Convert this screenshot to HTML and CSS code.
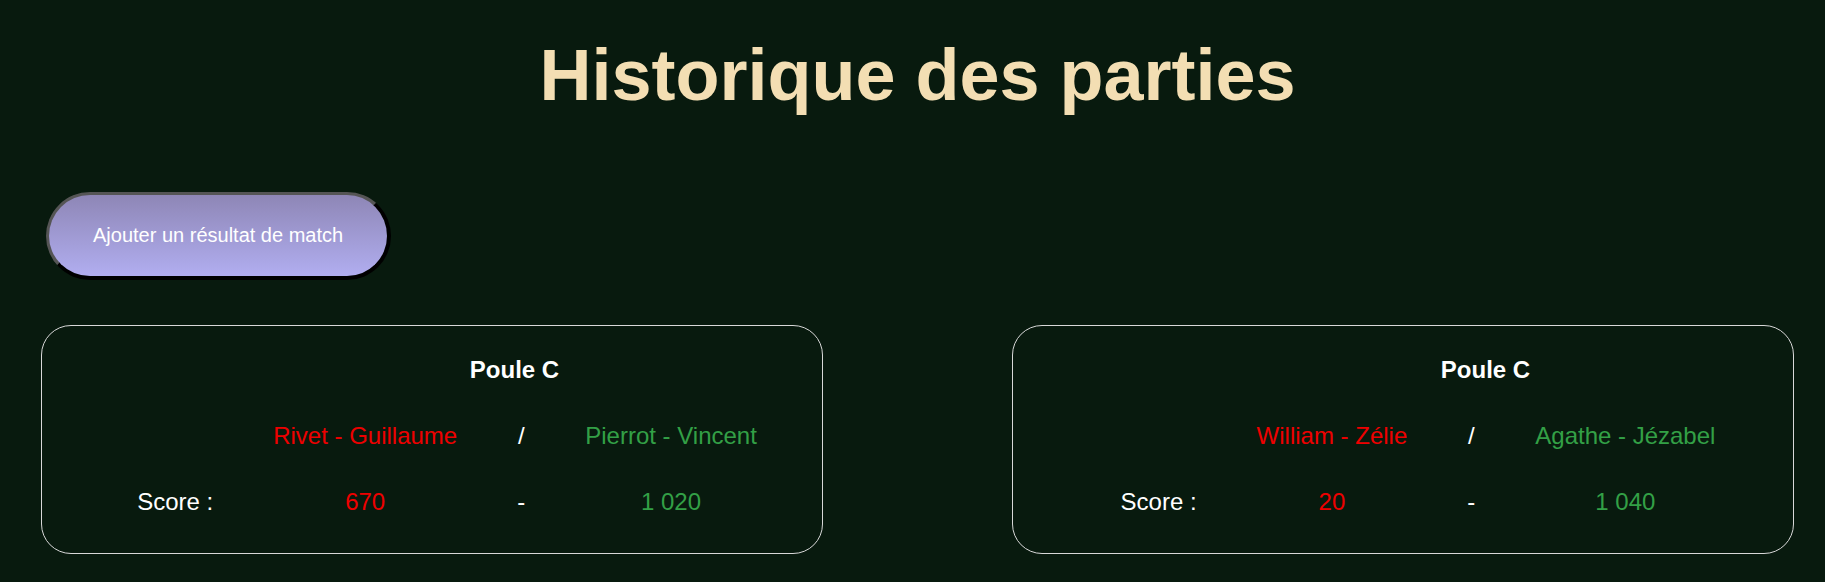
FILE: index.html
```html
<!DOCTYPE html>
<html lang="fr">
<head>
<meta charset="utf-8">
<title>Historique des parties</title>
<link rel="stylesheet" href="styles.css">
</head>
<body>
<main class="page">
  <h1 class="title">Historique des parties</h1>
  <button class="add-btn" type="button">Ajouter un résultat de match</button>
  <section class="matches">
    <article class="card">
      <h2 class="pool">Poule C</h2>
      <table class="match">
        <tr class="row">
          <td></td>
          <td class="team1">Rivet - Guillaume</td>
          <td class="sep">/</td>
          <td class="team2">Pierrot - Vincent</td>
        </tr>
        <tr class="row">
          <td class="label">Score :</td>
          <td class="team1">670</td>
          <td class="sep">-</td>
          <td class="team2">1 020</td>
        </tr>
      </table>
    </article>
    <article class="card">
      <h2 class="pool">Poule C</h2>
      <table class="match">
        <tr class="row">
          <td></td>
          <td class="team1">William - Zélie</td>
          <td class="sep">/</td>
          <td class="team2">Agathe - Jézabel</td>
        </tr>
        <tr class="row">
          <td class="label">Score :</td>
          <td class="team1">20</td>
          <td class="sep">-</td>
          <td class="team2">1 040</td>
        </tr>
      </table>
    </article>
  </section>
</main>
</body>
</html>
```

FILE: styles.css
```css
html, body {
  margin: 0;
  padding: 0;
  background: #081a0e;
}

body {
  font-family: "Liberation Sans", Arial, sans-serif;
  color: #ffffff;
}

.page {
  padding: 0 31px 0 41px;
  display: flex;
  flex-direction: column;
  align-items: flex-start;
}

.title {
  align-self: stretch;
  margin: 34px 0 0;
  text-align: center;
  font-size: 72px;
  font-weight: bold;
  line-height: 83px;
  color: #f3deb3;
}

.add-btn {
  margin: 75px 0 0 5px;
  padding: 28px 44px 29px;
  font-family: "Liberation Sans", Arial, sans-serif;
  font-size: 20px;
  line-height: 24px;
  color: #ffffff;
  border-width: 3px 4px 4px 3px;
  border-style: solid;
  border-color: #555555 #000000 #000000 #555555;
  border-radius: 46px;
  background: linear-gradient(to bottom, #8e86b6, #b1aef0);
}

.matches {
  align-self: stretch;
  margin-top: 45px;
  display: flex;
  justify-content: space-between;
}

.card {
  width: 782px;
  box-sizing: border-box;
  border: 1px solid #d8d8d8;
  border-radius: 30px;
  padding: 30px 0 37px 30px;
}

.pool {
  margin: 0 0 38px;
  padding-left: 135px;
  text-align: center;
  font-size: 24px;
  font-weight: bold;
  line-height: 28px;
  color: #ffffff;
}

.match {
  margin: 0 auto;
  border-collapse: collapse;
  border-spacing: 0;
  font-size: 24px;
  line-height: 28px;
}

.match td {
  padding: 0 30px;
  text-align: center;
  white-space: nowrap;
}

.match .row + .row td {
  padding-top: 38px;
}

.label,
.sep {
  color: #ffffff;
}

.team1 {
  color: #ee0000;
}

.team2 {
  color: #33a046;
}
```
